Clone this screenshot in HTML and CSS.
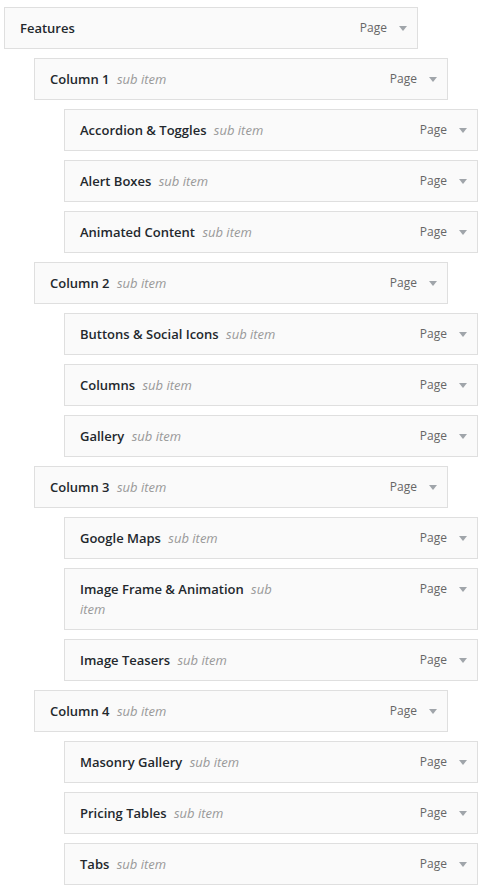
FILE: index.html
```html
<!DOCTYPE html>
<html lang="en">
<head>
    <meta charset="UTF-8">
    <meta name="viewport" content="width=device-width, initial-scale=1.0">
    <title>Menu Structure</title>
    <link rel="stylesheet" href="styles.css">
</head>
<body>
    <ul class="menu-list">
        <li class="menu-item depth-0">
            <div class="item-bar">
                <span class="item-title"><span class="item-name">Features</span></span>
                <span class="item-controls"><span class="item-type">Page</span><span class="item-arrow"></span></span>
            </div>
        </li>

        <li class="menu-item depth-1">
            <div class="item-bar">
                <span class="item-title"><span class="item-name">Column 1</span> <span class="is-sub">sub item</span></span>
                <span class="item-controls"><span class="item-type">Page</span><span class="item-arrow"></span></span>
            </div>
        </li>
        <li class="menu-item depth-2">
            <div class="item-bar">
                <span class="item-title"><span class="item-name">Accordion &amp; Toggles</span> <span class="is-sub">sub item</span></span>
                <span class="item-controls"><span class="item-type">Page</span><span class="item-arrow"></span></span>
            </div>
        </li>
        <li class="menu-item depth-2">
            <div class="item-bar">
                <span class="item-title"><span class="item-name">Alert Boxes</span> <span class="is-sub">sub item</span></span>
                <span class="item-controls"><span class="item-type">Page</span><span class="item-arrow"></span></span>
            </div>
        </li>
        <li class="menu-item depth-2">
            <div class="item-bar">
                <span class="item-title"><span class="item-name">Animated Content</span> <span class="is-sub">sub item</span></span>
                <span class="item-controls"><span class="item-type">Page</span><span class="item-arrow"></span></span>
            </div>
        </li>

        <li class="menu-item depth-1">
            <div class="item-bar">
                <span class="item-title"><span class="item-name">Column 2</span> <span class="is-sub">sub item</span></span>
                <span class="item-controls"><span class="item-type">Page</span><span class="item-arrow"></span></span>
            </div>
        </li>
        <li class="menu-item depth-2">
            <div class="item-bar">
                <span class="item-title"><span class="item-name">Buttons &amp; Social Icons</span> <span class="is-sub">sub item</span></span>
                <span class="item-controls"><span class="item-type">Page</span><span class="item-arrow"></span></span>
            </div>
        </li>
        <li class="menu-item depth-2">
            <div class="item-bar">
                <span class="item-title"><span class="item-name">Columns</span> <span class="is-sub">sub item</span></span>
                <span class="item-controls"><span class="item-type">Page</span><span class="item-arrow"></span></span>
            </div>
        </li>
        <li class="menu-item depth-2">
            <div class="item-bar">
                <span class="item-title"><span class="item-name">Gallery</span> <span class="is-sub">sub item</span></span>
                <span class="item-controls"><span class="item-type">Page</span><span class="item-arrow"></span></span>
            </div>
        </li>

        <li class="menu-item depth-1">
            <div class="item-bar">
                <span class="item-title"><span class="item-name">Column 3</span> <span class="is-sub">sub item</span></span>
                <span class="item-controls"><span class="item-type">Page</span><span class="item-arrow"></span></span>
            </div>
        </li>
        <li class="menu-item depth-2">
            <div class="item-bar">
                <span class="item-title"><span class="item-name">Google Maps</span> <span class="is-sub">sub item</span></span>
                <span class="item-controls"><span class="item-type">Page</span><span class="item-arrow"></span></span>
            </div>
        </li>
        <li class="menu-item depth-2">
            <div class="item-bar">
                <span class="item-title"><span class="item-name">Image Frame &amp; Animation</span> <span class="is-sub">sub item</span></span>
                <span class="item-controls"><span class="item-type">Page</span><span class="item-arrow"></span></span>
            </div>
        </li>
        <li class="menu-item depth-2">
            <div class="item-bar">
                <span class="item-title"><span class="item-name">Image Teasers</span> <span class="is-sub">sub item</span></span>
                <span class="item-controls"><span class="item-type">Page</span><span class="item-arrow"></span></span>
            </div>
        </li>

        <li class="menu-item depth-1">
            <div class="item-bar">
                <span class="item-title"><span class="item-name">Column 4</span> <span class="is-sub">sub item</span></span>
                <span class="item-controls"><span class="item-type">Page</span><span class="item-arrow"></span></span>
            </div>
        </li>
        <li class="menu-item depth-2">
            <div class="item-bar">
                <span class="item-title"><span class="item-name">Masonry Gallery</span> <span class="is-sub">sub item</span></span>
                <span class="item-controls"><span class="item-type">Page</span><span class="item-arrow"></span></span>
            </div>
        </li>
        <li class="menu-item depth-2">
            <div class="item-bar">
                <span class="item-title"><span class="item-name">Pricing Tables</span> <span class="is-sub">sub item</span></span>
                <span class="item-controls"><span class="item-type">Page</span><span class="item-arrow"></span></span>
            </div>
        </li>
        <li class="menu-item depth-2">
            <div class="item-bar">
                <span class="item-title"><span class="item-name">Tabs</span> <span class="is-sub">sub item</span></span>
                <span class="item-controls"><span class="item-type">Page</span><span class="item-arrow"></span></span>
            </div>
        </li>
    </ul>
</body>
</html>
```

FILE: styles.css
```css
body {
    margin: 0;
    background: #fff;
    font-family: 'Open Sans', 'Noto Sans', sans-serif;
    font-size: 13px;
    color: #23282d;
}

.menu-list {
    list-style: none;
    margin: 0;
    padding: 7px 0 0 4px;
}

.menu-item {
    margin: 0 0 9px 0;
}

.depth-1 {
    padding-left: 30px;
}

.depth-2 {
    padding-left: 60px;
}

.item-bar {
    display: flex;
    align-items: flex-start;
    width: 414px;
    box-sizing: border-box;
    padding: 10px 10px 10px 15px;
    background: #fafafa;
    border: 1px solid #dfdfdf;
    line-height: 20px;
}

/* title column leaves room for the type + arrow on the right */
.item-title {
    width: 213px;
}

.item-name {
    font-weight: 600;
}

.is-sub {
    margin-left: 4px;
    color: #999;
    font-style: italic;
}

.item-controls {
    margin-left: auto;
    display: flex;
    align-items: center;
    height: 20px;
}

.item-type {
    font-size: 12px;
    color: #666;
}

.item-arrow {
    width: 0;
    height: 0;
    margin: 1px 0 0 12px;
    border-left: 4px solid transparent;
    border-right: 4px solid transparent;
    border-top: 5px solid #a0a5aa;
}
```
